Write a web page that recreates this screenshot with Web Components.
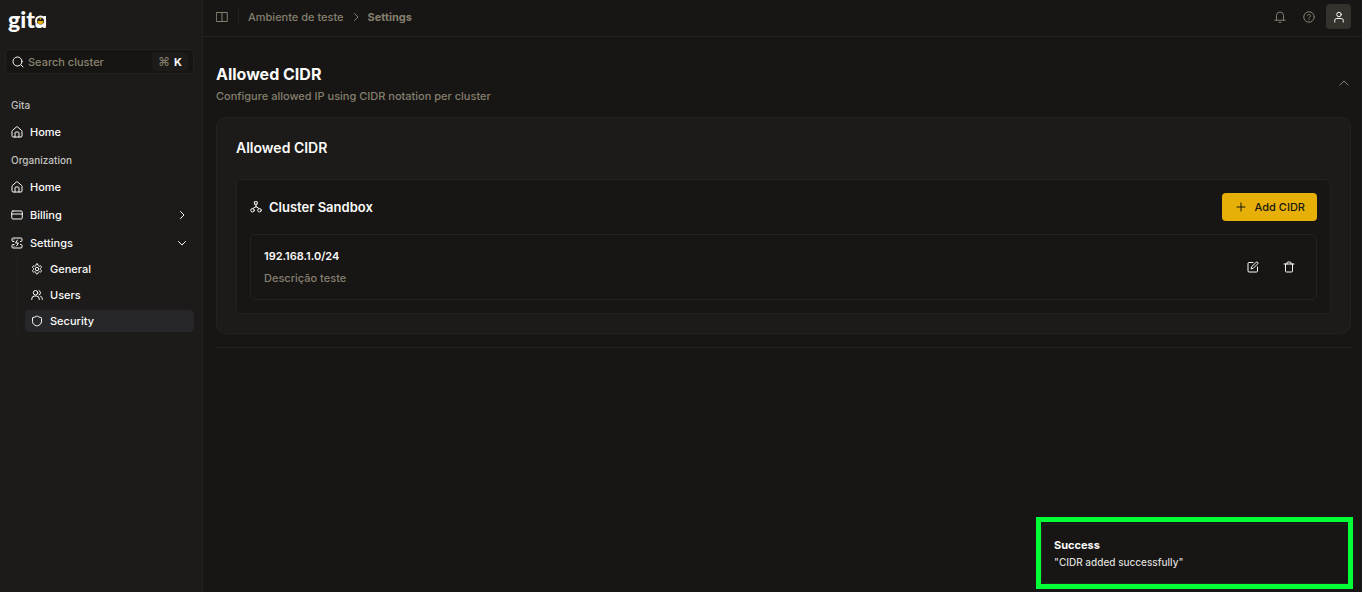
<!DOCTYPE html>
<html lang="en">
<head>
<meta charset="utf-8">
<meta name="viewport" content="width=device-width, initial-scale=1">
<title>Gita – Settings</title>
<style>
  :root {
    --bg: #171614;
    --panel: #1c1b19;
    --line: #23221f;
    --text: #fafaf9;
    --soft: #c4c3c0;
    --muted: #857f6e;
    --accent: #e7b008;
    --active: #27272a;
    --chip: #33322c;
  }
  html, body { margin: 0; min-height: 100%; background: var(--bg); }
  body { font: 500 11px/16px Inter, "Liberation Sans", sans-serif; color: var(--text); }
</style>
</head>
<body>
<app-shell>
  <side-bar slot="side">
    <search-field label="Search cluster"></search-field>
    <nav-group heading="Gita">
      <nav-item icon="home">Home</nav-item>
    </nav-group>
    <nav-group heading="Organization">
      <nav-item icon="home">Home</nav-item>
      <nav-item icon="card" trail="right">Billing</nav-item>
      <nav-item icon="settings" trail="down">Settings</nav-item>
      <sub-nav>
        <nav-item sub icon="gear">General</nav-item>
        <nav-item sub icon="users">Users</nav-item>
        <nav-item sub icon="shield" active>Security</nav-item>
      </sub-nav>
    </nav-group>
  </side-bar>
  <top-bar slot="top" parent="Ambiente de teste" current="Settings"></top-bar>
  <settings-section heading="Allowed CIDR" note="Configure allowed IP using CIDR notation per cluster">
    <panel-card heading="Allowed CIDR">
      <cluster-card name="Cluster Sandbox" action="Add CIDR">
        <cidr-entry range="192.168.1.0/24">Descrição teste</cidr-entry>
      </cluster-card>
    </panel-card>
  </settings-section>
</app-shell>
<toast-note heading="Success">"CIDR added successfully"</toast-note>

<script>
const ICONS = {
  search: '<circle cx="11" cy="11" r="9"/><path d="m22 22-4.500-4.500"/>',
  home: '<path d="M2 10.500a2 2 0 0 1 .7-1.500l8-7a2 2 0 0 1 2.600 0l8 7a2 2 0 0 1 .7 1.500V20a2 2 0 0 1-2 2H4a2 2 0 0 1-2-2z"/><path d="M8 22v-8a2 2 0 0 1 2-2h4a2 2 0 0 1 2 2v8"/>',
  card: '<rect x="1.500" y="4" width="21" height="16" rx="2.500"/><path d="M1.500 10h21"/>',
  settings: '<path d="M6 9H4a2 2 0 0 1-2-2V4a2 2 0 0 1 2-2h16a2 2 0 0 1 2 2v3a2 2 0 0 1-2 2h-1M6 15H4a2 2 0 0 0-2 2v3a2 2 0 0 0 2 2h16a2 2 0 0 0 2-2v-3a2 2 0 0 0-2-2h-1M6 5.500h.01M6 18.500h.01"/><path d="m13 6-4 6h6l-4 6"/>',
  gear: '<path d="M12.2 2h-.4a2 2 0 0 0-2 2v.2a2 2 0 0 1-1 1.700l-.4.300a2 2 0 0 1-2 0l-.2-.1a2 2 0 0 0-2.700.7l-.2.400a2 2 0 0 0 .7 2.700l.2.1a2 2 0 0 1 1 1.700v.5a2 2 0 0 1-1 1.700l-.2.1a2 2 0 0 0-.7 2.700l.2.400a2 2 0 0 0 2.700.7l.2-.1a2 2 0 0 1 2 0l.4.300a2 2 0 0 1 1 1.700v.2a2 2 0 0 0 2 2h.4a2 2 0 0 0 2-2v-.2a2 2 0 0 1 1-1.700l.4-.3a2 2 0 0 1 2 0l.2.1a2 2 0 0 0 2.700-.7l.2-.4a2 2 0 0 0-.7-2.700l-.2-.1a2 2 0 0 1-1-1.700v-.5a2 2 0 0 1 1-1.700l.2-.1a2 2 0 0 0 .7-2.700l-.2-.4a2 2 0 0 0-2.700-.7l-.2.1a2 2 0 0 1-2 0l-.4-.3a2 2 0 0 1-1-1.700V4a2 2 0 0 0-2-2z"/><circle cx="12" cy="12" r="3.500"/>',
  users: '<circle cx="9" cy="7.500" r="4.500"/><path d="M1.500 21v-1a6 6 0 0 1 6-6h3a6 6 0 0 1 6 6v1M22.500 21v-2a5 5 0 0 0-3.500-4.600M16 3.300a4.500 4.500 0 0 1 0 8.500"/>',
  shield: '<path d="M21 13c0 5-4 7.500-8.700 9a1 1 0 0 1-.6 0C7 20.500 3 18 3 13V6a1 1 0 0 1 1-1c2.500 0 5-1.200 7.200-2.700a1.200 1.200 0 0 1 1.600 0C15 3.800 17.500 5 20 5a1 1 0 0 1 1 1z"/>',
  right: '<path d="m9 19 7-7-7-7"/>',
  down: '<path d="m5 9 7 7 7-7"/>',
  up: '<path d="m4 14 8-8 8 8"/>',
  panel: '<path d="M1.500 3h21v18h-21zM12 3v18"/>',
  bell: '<path d="M5 17.500V9a7 7 0 0 1 14 0v8.500M1.500 18.500h21M10 22.500h4"/>',
  help: '<circle cx="12" cy="12" r="10.500"/><path d="M9 9.500a3 3 0 1 1 4.500 2.600c-1 .6-1.500 1-1.500 2.400M12 17.500v.5"/>',
  user: '<circle cx="12" cy="7" r="4.500"/><path d="M3.500 22v-3a4 4 0 0 1 4-4h9a4 4 0 0 1 4 4v3"/>',
  cluster: '<path d="M9.500 1.500h5v5h-5zM12 7v5M12 11l-6 4M12 11l6 4"/><circle cx="5" cy="18.500" r="3.500"/><circle cx="19" cy="18.500" r="3.500"/>',
  plus: '<path d="M4 12h16M12 4v16"/>',
  edit: '<path d="M12 3H4a2 2 0 0 0-2 2v15a2 2 0 0 0 2 2h15a2 2 0 0 0 2-2v-8"/><path d="M18.400 2.600a2.100 2.100 0 0 1 3 3L12.500 14.500 8 16l1.500-4.500z"/>',
  trash: '<path d="M2 6h20M5 6v14a2 2 0 0 0 2 2h10a2 2 0 0 0 2-2V6M8 6V4a2 2 0 0 1 2-2h4a2 2 0 0 1 2 2v2"/>'
};

function icon(name, size = 12, width = 2) {
  return `<svg width="${size}" height="${size}" viewBox="0 0 24 24" fill="none" stroke="currentColor" stroke-width="${width}" stroke-linecap="round" stroke-linejoin="round" aria-hidden="true">${ICONS[name]}</svg>`;
}

const BASE = `
  * { box-sizing: border-box; }
  :host { display: block; box-sizing: border-box; }
  svg { display: block; flex: none; }
  h1, h2, h3, p { margin: 0; font: inherit; }
  button { font: inherit; color: inherit; border: 0; margin: 0; padding: 0; background: none; cursor: pointer; }
  a { color: inherit; text-decoration: none; }
`;

function define(name, css, markup) {
  customElements.define(name, class extends HTMLElement {
    constructor() {
      super();
      this.attachShadow({ mode: "open" });
    }
    connectedCallback() {
      const get = key => this.getAttribute(key) || "";
      this.shadowRoot.innerHTML = `<style>${BASE}${css}</style>${markup(get, this)}`;
    }
  });
}

define("app-shell", `
  :host { display: grid; grid-template-columns: 203px minmax(0, 1fr); min-height: 100vh; }
  aside { background: var(--panel); border-right: 1px solid var(--line); }
  .main { display: flex; flex-direction: column; }
  main { padding: 27px 11px 0 13px; }
`, () => `
  <aside><slot name="side"></slot></aside>
  <div class="main"><slot name="top"></slot><main><slot></slot></main></div>
`);

define("brand-logo", `
  a { display: inline-grid; font: 900 23px/24px Lato, sans-serif; color: var(--text); }
  span, svg { grid-area: 1 / 1; }
  svg { justify-self: end; align-self: end; margin: 0 1px 4px 0; }
`, () => `
  <a href="#"><span>gita</span>
  <svg width="11" height="12" viewBox="0 0 11 12" aria-hidden="true"><circle cx="5.500" cy="6" r="4.500" fill="#2a2517" stroke="#fafaf9" stroke-width="2"/><path d="M9 1h2v10.500H9z" fill="#fafaf9"/><path d="M4.500 3h2l-1 2z" fill="#e7b008"/><path d="M2.500 6h6l-1 3h-4z" fill="#e7b008"/></svg></a>
`);

define("side-bar", `
  header { padding: 7px 8px 0; height: 49px; }
  nav { padding: 0 8px 0 5px; }
`, () => `
  <header><brand-logo></brand-logo></header>
  <nav><slot></slot></nav>
`);

define("search-field", `
  :host { margin-bottom: 23px; }
  label { display: flex; align-items: center; gap: 4px; height: 25px; padding: 0 5px 0 6px; border: 1px solid var(--line); border-radius: 5px; background: #161513; }
  input { flex: 1; min-width: 0; font: inherit; color: var(--text); border: 0; padding: 0; outline: 0; background: none; }
  input::placeholder { color: #8a8471; opacity: 1; }
  kbd { display: flex; align-items: center; gap: 4px; height: 19px; padding: 0 6px; border-radius: 4px; background: var(--panel); font: 700 11px/16px Inter, sans-serif; }
  kbd span { color: var(--muted); font-size: 12px; font-weight: 400; }
`, get => `
  <label>${icon("search")}<input type="text" placeholder="${get("label")}" aria-label="${get("label")}"><kbd><span>⌘</span>K</kbd></label>
`);

define("nav-group", `
  h2 { padding: 0 6px; font-size: 10px; line-height: 16px; color: var(--soft); }
  div { padding: 5px 0 6px; }
`, get => `<h2>${get("heading")}</h2><div><slot></slot></div>`);

define("nav-item", `
  a { display: flex; align-items: center; gap: 7px; height: 28px; padding: 0 6px; border-radius: 4px; }
  span { flex: 1; }
  :host([sub]) a { height: 22px; }
  :host([active]) a { background: var(--active); }
`, (get, el) => `
  <a href="#"${el.hasAttribute("active") ? ' aria-current="page"' : ""}>${icon(get("icon"))}<span><slot></slot></span>${get("trail") ? icon(get("trail")) : ""}</a>
`);

define("sub-nav", `
  :host { display: grid; gap: 4px; margin-left: 12px; padding: 1px 0 1px 7px; border-left: 1px solid var(--line); }
`, () => `<slot></slot>`);

define("top-bar", `
  header { display: flex; align-items: center; height: 37px; padding: 0 11px 3px 13px; border-bottom: 1px solid var(--line); color: var(--muted); }
  ol { display: flex; align-items: center; gap: 6px; flex: 1; margin: 0 0 0 10px; padding: 0 0 0 9px; border-left: 1px solid var(--line); list-style: none; }
  li { display: flex; }
  .now { font-weight: 700; }
  .tools { display: flex; align-items: center; gap: 17px; }
  .me { display: grid; place-items: center; width: 25px; height: 25px; margin-left: -6px; border-radius: 4px; background: var(--chip); color: var(--text); }
`, get => `
  <header>
    <button aria-label="Toggle sidebar">${icon("panel")}</button>
    <ol><li><a href="#">${get("parent")}</a></li><li>${icon("right")}</li><li class="now">${get("current")}</li></ol>
    <div class="tools">
      <button aria-label="Notifications">${icon("bell")}</button>
      <button aria-label="Help">${icon("help")}</button>
      <button class="me" aria-label="Account">${icon("user")}</button>
    </div>
  </header>
`);

define("settings-section", `
  :host { padding-bottom: 13px; border-bottom: 1px solid var(--line); }
  .head { display: flex; align-items: center; justify-content: space-between; margin-bottom: 13px; }
  h1 { font-size: 16px; line-height: 20px; font-weight: 700; }
  p { margin-top: 4px; color: var(--muted); }
  button { color: var(--muted); padding: 0 1px; }
`, get => `
  <div class="head"><div><h1>${get("heading")}</h1><p>${get("note")}</p></div>
  <button aria-label="Collapse section">${icon("up")}</button></div>
  <slot></slot>
`);

define("panel-card", `
  :host { padding: 20px 19px 19px; border: 1px solid var(--line); border-radius: 10px; background: var(--panel); }
  h2 { margin-bottom: 21px; font-size: 14px; line-height: 20px; font-weight: 600; }
`, get => `<h2>${get("heading")}</h2><slot></slot>`);

define("cluster-card", `
  :host { padding: 13px; border: 1px solid var(--line); border-radius: 5px; background: var(--bg); }
  .head { display: flex; align-items: center; gap: 7px; margin-bottom: 13px; }
  h3 { flex: 1; font-size: 13px; line-height: 16px; font-weight: 600; }
  button { display: flex; align-items: center; gap: 8px; height: 28px; padding: 0 12px 0 13px; border-radius: 4px; background: var(--accent); color: #171614; }
`, get => `
  <div class="head">${icon("cluster")}<h3>${get("name")}</h3><button>${icon("plus")}${get("action")}</button></div>
  <slot></slot>
`);

define("cidr-entry", `
  :host { display: flex; align-items: center; padding: 13px 21px 13px 13px; border: 1px solid var(--line); border-radius: 5px; }
  .text { flex: 1; }
  h3 { font-weight: 600; }
  p { margin-top: 6px; color: var(--muted); }
  .tools { display: flex; gap: 24px; }
`, get => `
  <div class="text"><h3>${get("range")}</h3><p><slot></slot></p></div>
  <div class="tools"><button aria-label="Edit">${icon("edit")}</button><button aria-label="Delete">${icon("trash")}</button></div>
`);

define("toast-note", `
  :host { position: fixed; right: 9px; bottom: 3px; width: 317px; border: 5px solid #00ff37; background: var(--bg); }
  section { margin-top: 2px; padding: 12px; height: 60px; border: 1px solid var(--line); border-right: 0; border-radius: 5px 0 0 5px; }
  h2 { font-size: 11px; line-height: 16px; font-weight: 700; }
  p { margin-top: 1px; font-size: 10px; line-height: 16px; color: #dddcd9; }
`, get => `<section role="status"><h2>${get("heading")}</h2><p><slot></slot></p></section>`);
</script>
</body>
</html>
